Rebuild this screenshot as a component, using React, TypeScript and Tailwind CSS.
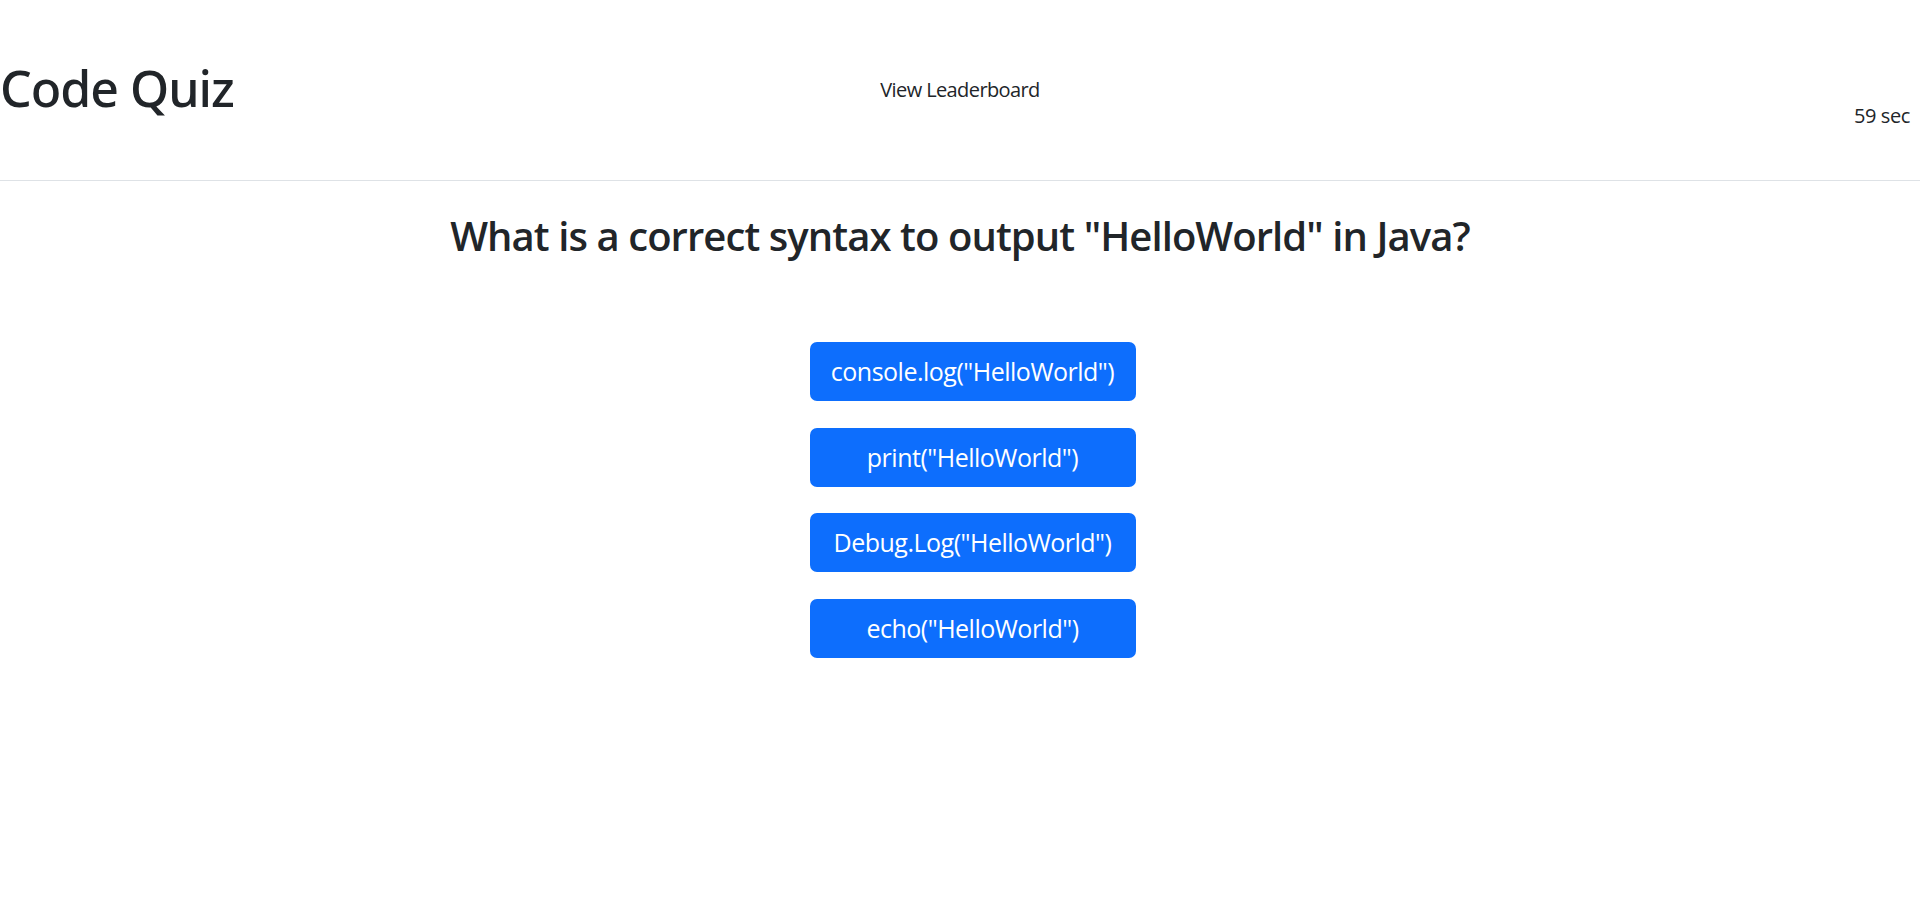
import React from "react";

const answers = [
  'console.log("HelloWorld")',
  'print("HelloWorld")',
  'Debug.Log("HelloWorld")',
  'echo("HelloWorld")',
];

export default function App() {
  return (
    <div
      className="min-h-[922px] w-full bg-white text-[#212529]"
      style={{ fontFamily: '"Open Sans", "Noto Sans", sans-serif' }}
    >
      <header className="grid h-[181px] grid-cols-3 border-b border-[#dee2e6]">
        <h1
          className="mt-[58px] justify-self-start text-[50px] leading-[60px] font-medium tracking-[-0.02em]"
          style={{ fontFamily: '"Noto Sans", "Open Sans", sans-serif' }}
        >
          Code Quiz
        </h1>
        <a className="mt-[75px] justify-self-center text-[20px] leading-[30px] tracking-[-0.03em] cursor-pointer">
          View Leaderboard
        </a>
        <div className="mt-[101px] justify-self-end pr-[10px] text-[20px] leading-[30px] tracking-[-0.02em]">
          59 sec
        </div>
      </header>
      <main className="flex flex-col items-center">
        <h2 className="mt-[31px] text-[40px] leading-[48px] font-semibold tracking-[-0.023em]">
          What is a correct syntax to output "HelloWorld" in Java?
        </h2>
        <div className="ml-[25px] mt-[82px] flex flex-col gap-[26.7px]">
          {answers.map((a) => (
            <button
              key={a}
              className="h-[59px] w-[326px] rounded-[7px] bg-[#0d6efd] text-[25px] leading-[37px] tracking-[-0.02em] text-white"
            >
              {a}
            </button>
          ))}
        </div>
      </main>
    </div>
  );
}
